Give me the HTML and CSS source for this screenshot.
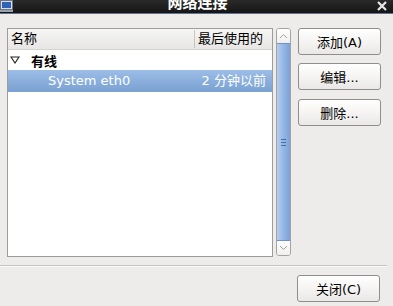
FILE: index.html
```html
<!DOCTYPE html>
<html lang="zh-CN">
<head>
<meta charset="UTF-8">
<title>网络连接</title>
<link rel="stylesheet" href="styles.css">
</head>
<body>

<!-- TITLE BAR -->
<div class="titlebar">
    <svg class="app-icon" width="13" height="12" viewBox="0 0 13 12">
        <rect x="0.5" y="0.5" width="12" height="9" fill="#d8dde4" stroke="#6b7480"/>
        <rect x="2" y="2" width="9" height="6" fill="#2f63b8"/>
        <rect x="0" y="10" width="13" height="2" fill="#9aa2ac"/>
    </svg>
    <div class="title">网络连接</div>
    <svg class="close" width="12" height="10" viewBox="0 0 12 10">
        <path d="M2 1 L10 9 M10 1 L2 9" stroke="#e8e8e8" stroke-width="2.2"/>
    </svg>
</div>

<div class="main">
    <div class="top">
        <!-- CONNECTION LIST -->
        <div class="list">
            <div class="list-head">
                <div class="col-name">名称</div>
                <div class="col-used">最后使用的</div>
            </div>
            <div class="group">
                <svg class="expander" width="10" height="8" viewBox="0 0 10 8">
                    <path d="M1 1 L9 1 L5 7 Z" fill="none" stroke="#222" stroke-width="1.1"/>
                </svg>
                <span>有线</span>
            </div>
            <div class="item selected">
                <span class="item-name">System eth0</span>
                <span class="item-used">2 分钟以前</span>
            </div>
        </div>

        <!-- SCROLLBAR -->
        <div class="scrollbar">
            <div class="arrow">
                <svg width="9" height="6" viewBox="0 0 9 6"><path d="M1 5 L4.5 1.5 L8 5" fill="none" stroke="#a0a0a0"/></svg>
            </div>
            <div class="thumb">
                <div class="grip"></div>
            </div>
            <div class="arrow">
                <svg width="9" height="6" viewBox="0 0 9 6"><path d="M1 1 L4.5 4.5 L8 1" fill="none" stroke="#a0a0a0"/></svg>
            </div>
        </div>

        <!-- ACTIONS -->
        <div class="actions">
            <button>添加(A)</button>
            <button>编辑...</button>
            <button>删除...</button>
        </div>
    </div>

    <div class="separator"></div>

    <div class="bottom">
        <button>关闭(C)</button>
    </div>
</div>

</body>
</html>
```

FILE: styles.css
```css
body {
    margin: 0;
    width: 393px;
    height: 306px;
    overflow: hidden;
    background: #edeceb;
    font-family: "DejaVu Sans", "Noto Sans CJK SC", sans-serif;
    font-size: 13px;
    color: #000;
}
.titlebar {
    position: relative;
    height: 13px;
    background: linear-gradient(#2a2a2a, #151515);
    border-bottom: 1px solid #5d7391;
    overflow: hidden;
}
.app-icon { position: absolute; left: 0; top: 0; }
.close { position: absolute; left: 376px; top: 1px; }
.title {
    text-align: center;
    color: #fff;
    font-weight: bold;
    font-size: 15px;
    line-height: 15px;
    margin-top: -4px;
    padding-left: 2px;
}
.main { padding: 14px 0 0 7px; }
.top { display: flex; align-items: flex-start; }
.list {
    width: 264px;
    height: 227px;
    background: #fff;
    border: 1px solid #9d9c9a;
}
.list-head {
    display: flex;
    height: 20px;
    line-height: 20px;
    background: linear-gradient(#f6f6f5, #e7e6e4);
    border-bottom: 1px solid #d4d3d0;
}
.col-name { width: 183px; padding-left: 3px; border-right: 1px solid #c6c5c2; margin: 1px 0; line-height: 18px; }
.col-used { padding-left: 3px; }
.group {
    height: 20px;
    display: flex;
    align-items: center;
    font-weight: bold;
    padding-left: 2px;
}
.expander { margin: 0 11px 0 0; }
.item {
    display: flex;
    justify-content: space-between;
    height: 22px;
    line-height: 22px;
    padding: 0 6px 0 40px;
}
.selected {
    background: linear-gradient(#9cbde6, #7aa1d2);
    color: #fff;
}
.scrollbar {
    width: 13px;
    height: 226px;
    margin-left: 3px;
    border: 1px solid #a4a3a1;
    border-radius: 3px;
    background: #fff;
    display: flex;
    flex-direction: column;
    overflow: hidden;
}
.arrow {
    height: 14px;
    display: flex;
    align-items: center;
    justify-content: center;
    background: linear-gradient(#fff, #f0efed);
}
.thumb {
    flex: 1;
    background: linear-gradient(90deg, #b5cdef, #8fb2e2 60%, #7ea2d6);
    border-top: 1px solid #6f93c6;
    border-bottom: 1px solid #6f93c6;
    display: flex;
    align-items: center;
    justify-content: center;
}
.grip {
    width: 5px;
    height: 5px;
    border-top: 1px solid #4a6ea3;
    border-bottom: 1px solid #4a6ea3;
    background: linear-gradient(transparent 2px, #4a6ea3 2px, #4a6ea3 3px, transparent 3px);
}
.actions {
    display: flex;
    flex-direction: column;
    gap: 8px;
    margin-left: 7px;
}
button {
    width: 83px;
    height: 27px;
    font-family: "DejaVu Sans", "Noto Sans CJK SC", sans-serif;
    font-size: 13px;
    color: #000;
    border: 1px solid #8f8e8b;
    border-radius: 3px;
    background: linear-gradient(#ffffff, #f3f2f0 60%, #e9e8e6);
    padding: 0;
}
.actions button:nth-child(3) { margin-top: 1px; }
.separator {
    height: 0;
    border-top: 1px solid #c4c3c0;
    border-bottom: 1px solid #fafafa;
    margin: 8px 6px 0 -7px;
}
.bottom {
    display: flex;
    justify-content: flex-end;
    padding: 8px 13px 0 0;
}
```
